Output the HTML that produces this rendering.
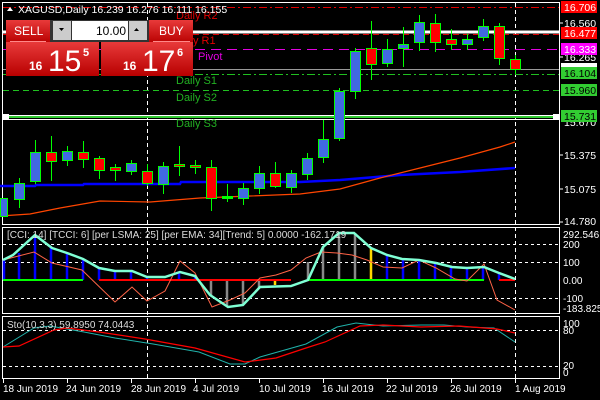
<!DOCTYPE html>
<html><head><meta charset="utf-8"><style>
body{margin:0;background:#000;width:600px;height:400px;overflow:hidden;font-family:"Liberation Sans",sans-serif}
svg{position:absolute;left:0;top:0}
text{font-family:"Liberation Sans",sans-serif}
</style></head><body>
<svg width="600" height="400" xmlns="http://www.w3.org/2000/svg" font-size="10">
<g stroke="#fff" fill="none" stroke-width="1">
<rect x="2.5" y="2.5" width="557" height="222"/>
<rect x="2.5" y="227.5" width="557" height="86"/>
<rect x="2.5" y="316.5" width="557" height="62"/>
</g>
<g stroke="#fff" stroke-dasharray="4,3">
<line x1="147.5" y1="3" x2="147.5" y2="378"/>
<line x1="515.5" y1="3" x2="515.5" y2="378"/>
</g>
<line x1="3" y1="7.5" x2="559" y2="7.5" stroke="#e00000" stroke-dasharray="8,3,2,3"/>
<line x1="3" y1="32" x2="559" y2="32" stroke="#fff" stroke-width="3"/>
<line x1="3" y1="34.5" x2="559" y2="34.5" stroke="#e00000" stroke-dasharray="6,4"/>
<line x1="3" y1="49.5" x2="559" y2="49.5" stroke="#e000e0" stroke-dasharray="10,6"/>
<line x1="3" y1="69.5" x2="559" y2="69.5" stroke="#999"/>
<line x1="3" y1="74.5" x2="559" y2="74.5" stroke="#20c020" stroke-dasharray="8,3,2,3"/>
<line x1="3" y1="90.5" x2="559" y2="90.5" stroke="#20c020" stroke-dasharray="6,4"/>
<line x1="3" y1="115.5" x2="559" y2="115.5" stroke="#fff"/>
<line x1="3" y1="117" x2="559" y2="117" stroke="#3c3" stroke-width="2"/>
<line x1="3" y1="119.5" x2="559" y2="119.5" stroke="#fff"/>
<rect x="2" y="114" width="7" height="6" fill="#fff"/>
<rect x="553" y="114" width="6" height="6" fill="#fff"/>
<text x="176" y="19" fill="#e00000" font-size="11">Daily R2</text>
<text x="193" y="44" fill="#e00000" font-size="11">y R1</text>
<text x="198" y="60" fill="#e000e0" font-size="11">Pivot</text>
<text x="176" y="84" fill="#22b022" font-size="11">Daily S1</text>
<text x="176" y="101" fill="#22b022" font-size="11">Daily S2</text>
<text x="176" y="127" fill="#22b022" font-size="11">Daily S3</text>
<polyline fill="none" stroke="#0000ff" stroke-width="2.5" points="0,186 35,186 36,185 83,185 84,184 180,184 181,182 300,182 340,180 400,175 460,172 515,168"/>
<polyline fill="none" stroke="#ff4500" stroke-width="1.2" points="0,216 30,214 60,208 100,201 150,202 200,198 250,196 300,194 340,189 380,178 420,168 460,158 500,147 515,142"/>
<g stroke="#00ff00" stroke-width="1">
<line x1="19.5" y1="178" x2="19.5" y2="208"/><line x1="35.5" y1="140" x2="35.5" y2="184"/><line x1="51.5" y1="136" x2="51.5" y2="181"/><line x1="67.5" y1="146" x2="67.5" y2="166"/><line x1="83.5" y1="141" x2="83.5" y2="168"/><line x1="99.5" y1="156" x2="99.5" y2="179"/><line x1="115.5" y1="164" x2="115.5" y2="181"/><line x1="131.5" y1="160" x2="131.5" y2="175"/><line x1="147.5" y1="164" x2="147.5" y2="186"/><line x1="163.5" y1="162" x2="163.5" y2="194"/><line x1="179.5" y1="146" x2="179.5" y2="176"/><line x1="195.5" y1="160" x2="195.5" y2="174"/><line x1="211.5" y1="160" x2="211.5" y2="211"/><line x1="227.5" y1="184" x2="227.5" y2="202"/><line x1="243.5" y1="183" x2="243.5" y2="205"/><line x1="259.5" y1="166" x2="259.5" y2="194"/><line x1="275.5" y1="162" x2="275.5" y2="188"/><line x1="291.5" y1="170" x2="291.5" y2="193"/><line x1="307.5" y1="153" x2="307.5" y2="180"/><line x1="323.5" y1="120" x2="323.5" y2="163"/><line x1="339.5" y1="88" x2="339.5" y2="141"/><line x1="355.5" y1="48" x2="355.5" y2="99"/><line x1="371.5" y1="21" x2="371.5" y2="80"/><line x1="387.5" y1="39" x2="387.5" y2="67"/><line x1="403.5" y1="27" x2="403.5" y2="67"/><line x1="419.5" y1="15" x2="419.5" y2="51"/><line x1="435.5" y1="14" x2="435.5" y2="52"/><line x1="451.5" y1="29" x2="451.5" y2="50"/><line x1="467.5" y1="34" x2="467.5" y2="50"/><line x1="483.5" y1="19" x2="483.5" y2="41"/><line x1="499.5" y1="23" x2="499.5" y2="65"/><line x1="515.5" y1="55" x2="515.5" y2="74"/>
</g>
<g stroke="#00ff00" stroke-width="1">
<rect x="0.5" y="198.5" width="7" height="18" fill="#4169e1"/>
<rect x="14.5" y="183.5" width="10" height="16" fill="#4169e1"/>
<rect x="30.5" y="152.5" width="10" height="29" fill="#4169e1"/>
<rect x="46.5" y="152.5" width="10" height="9" fill="#f00"/>
<rect x="62.5" y="151.5" width="10" height="9" fill="#4169e1"/>
<rect x="78.5" y="152.5" width="10" height="7" fill="#f00"/>
<rect x="94.5" y="158.5" width="10" height="12" fill="#f00"/>
<rect x="110.5" y="167.5" width="10" height="3" fill="#f00"/>
<rect x="126.5" y="163.5" width="10" height="8" fill="#4169e1"/>
<rect x="142.5" y="171.5" width="10" height="12" fill="#f00"/>
<rect x="158.5" y="166.5" width="10" height="18" fill="#4169e1"/>
<rect x="174.5" y="164.5" width="10" height="2" fill="#f00"/>
<rect x="190.5" y="165.5" width="10" height="2" fill="#f00"/>
<rect x="206.5" y="167.5" width="10" height="31" fill="#f00"/>
<rect x="222.5" y="196.5" width="10" height="2" fill="#00ff00"/>
<rect x="238.5" y="188.5" width="10" height="10" fill="#4169e1"/>
<rect x="254.5" y="173.5" width="10" height="15" fill="#4169e1"/>
<rect x="270.5" y="173.5" width="10" height="13" fill="#f00"/>
<rect x="286.5" y="173.5" width="10" height="14" fill="#4169e1"/>
<rect x="302.5" y="158.5" width="10" height="16" fill="#4169e1"/>
<rect x="318.5" y="139.5" width="10" height="18" fill="#4169e1"/>
<rect x="334.5" y="91.5" width="10" height="47" fill="#4169e1"/>
<rect x="350.5" y="51.5" width="10" height="40" fill="#4169e1"/>
<rect x="366.5" y="48.5" width="10" height="16" fill="#f00"/>
<rect x="382.5" y="49.5" width="10" height="14" fill="#4169e1"/>
<rect x="398.5" y="44.5" width="10" height="4" fill="#4169e1"/>
<rect x="414.5" y="22.5" width="10" height="20" fill="#4169e1"/>
<rect x="430.5" y="23.5" width="10" height="19" fill="#f00"/>
<rect x="446.5" y="39.5" width="10" height="5" fill="#f00"/>
<rect x="462.5" y="39.5" width="10" height="5" fill="#4169e1"/>
<rect x="478.5" y="26.5" width="10" height="11" fill="#4169e1"/>
<rect x="494.5" y="26.5" width="10" height="32" fill="#f00"/>
<rect x="510.5" y="59.5" width="10" height="10" fill="#f00"/>
</g>
<polygon points="7,11 10,7 13,11" fill="#fff"/>
<text x="18" y="13" fill="#fff" font-size="10.5">XAGUSD,Daily  16.239 16.276 16.111 16.155</text>
<g font-size="10.5">
<text x="564" y="27" fill="#fff">16.560</text>
<text x="564" y="61" fill="#fff">16.265</text>
<rect x="561" y="63" width="36" height="4" fill="#fff"/>
<text x="564" y="126" fill="#fff">15.670</text>
<text x="564" y="159" fill="#fff">15.375</text>
<text x="564" y="193" fill="#fff">15.075</text>
<text x="564" y="225" fill="#fff">14.780</text>
<rect x="561" y="1" width="36" height="12" fill="#f00"/><text x="564" y="11" fill="#fff">16.706</text>
<rect x="561" y="27" width="36" height="12" fill="#f00"/><text x="564" y="37" fill="#fff">16.477</text>
<rect x="561" y="43" width="36" height="12" fill="#f0f"/><text x="564" y="53" fill="#fff">16.333</text>
<rect x="561" y="67" width="36" height="12" fill="#32cd32"/><text x="564" y="77" fill="#000">16.104</text>
<rect x="561" y="84" width="36" height="12" fill="#32cd32"/><text x="564" y="94" fill="#000">15.960</text>
<rect x="561" y="110" width="36" height="12" fill="#32cd32"/><text x="564" y="120" fill="#000">15.731</text>
</g>
<g stroke="#fff"><line x1="559" y1="23" x2="563" y2="23"/><line x1="559" y1="57" x2="563" y2="57"/><line x1="559" y1="155" x2="563" y2="155"/><line x1="559" y1="189" x2="563" y2="189"/><line x1="559" y1="222" x2="563" y2="222"/></g>
<g stroke="#fff" stroke-dasharray="3,3"><line x1="3" y1="244.5" x2="559" y2="244.5"/><line x1="3" y1="262.5" x2="559" y2="262.5"/><line x1="3" y1="298.5" x2="559" y2="298.5"/><line x1="3" y1="330.5" x2="559" y2="330.5"/><line x1="3" y1="366.5" x2="559" y2="366.5"/></g>
<g stroke-width="2.5">
<line x1="4" y1="280" x2="4" y2="260" stroke="#00f"/><line x1="19" y1="280" x2="19" y2="253" stroke="#00f"/><line x1="35" y1="280" x2="35" y2="236" stroke="#00f"/><line x1="51" y1="280" x2="51" y2="248" stroke="#00f"/><line x1="67" y1="280" x2="67" y2="253" stroke="#00f"/><line x1="83" y1="280" x2="83" y2="259" stroke="#00f"/><line x1="99" y1="280" x2="99" y2="268" stroke="#00f"/><line x1="115" y1="280" x2="115" y2="271" stroke="#00f"/><line x1="131" y1="280" x2="131" y2="271" stroke="#00f"/><line x1="147" y1="280" x2="147" y2="277" stroke="#00f"/><line x1="179" y1="280" x2="179" y2="272" stroke="#00f"/><line x1="195" y1="280" x2="195" y2="276" stroke="#00f"/>
<line x1="211" y1="280" x2="211" y2="295" stroke="#888"/><line x1="227" y1="280" x2="227" y2="306" stroke="#888"/><line x1="243" y1="280" x2="243" y2="305" stroke="#888"/><line x1="259" y1="280" x2="259" y2="288" stroke="#888"/>
<line x1="275" y1="280" x2="275" y2="285" stroke="#ffd700"/>
<line x1="308" y1="280" x2="308" y2="262" stroke="#888"/><line x1="323" y1="280" x2="323" y2="247" stroke="#888"/><line x1="339" y1="280" x2="339" y2="233" stroke="#888"/><line x1="355" y1="280" x2="355" y2="233" stroke="#888"/>
<line x1="371" y1="280" x2="371" y2="248" stroke="#ffd700"/>
<line x1="387" y1="280" x2="387" y2="255" stroke="#00f"/><line x1="403" y1="280" x2="403" y2="259" stroke="#00f"/><line x1="419" y1="280" x2="419" y2="260" stroke="#00f"/><line x1="435" y1="280" x2="435" y2="263" stroke="#00f"/><line x1="451" y1="280" x2="451" y2="267" stroke="#00f"/><line x1="467" y1="280" x2="467" y2="268" stroke="#00f"/><line x1="483" y1="280" x2="483" y2="267" stroke="#00f"/><line x1="499" y1="280" x2="499" y2="273" stroke="#00f"/>
</g>
<g stroke-width="2"><line x1="3" y1="280" x2="83" y2="280" stroke="#0f0"/><line x1="308" y1="280" x2="484" y2="280" stroke="#0f0"/><line x1="99" y1="280" x2="291" y2="280" stroke="#f00"/><line x1="499" y1="280" x2="515" y2="280" stroke="#f00"/></g>
<polyline fill="none" stroke="#ff6347" stroke-width="1" points="3,260 34,252 52,263 82,270 115,302 132,287 147,301 165,291 180,261 195,273 212,307 230,300 245,293 260,278 276,275 291,270 306,258 321,252 337,253 352,255 367,260 383,267 402,268 419,260 436,268 455,279 467,281 484,264 497,300 515,310"/>
<polyline fill="none" stroke="#7fffd4" stroke-width="2.5" points="3,260 13,255 35,235 52,248 67,253 83,259 99,268 115,271 132,271 147,277 165,277 180,272 195,276 210,295 228,307 243,305 260,287 291,286 308,280 323,247 339,233 354,233 371,248 387,255 402,259 419,260 436,263 452,267 467,268 484,267 499,273 515,279"/>
<text x="7" y="238" fill="#ddd" font-size="10">[CCI: 14] [TCCI: 6] [per LSMA: 25] [per EMA: 34][Trend: 5]  0.0000 -162.1719</text>
<g fill="#fff" font-size="10"><text x="563" y="238">292.546</text><text x="563" y="248">200</text><text x="563" y="266">100</text><text x="563" y="284">0.00</text><text x="563" y="302">-100</text><text x="563" y="312">-183.825</text>
<text x="563" y="327">100</text><text x="563" y="334">80</text><text x="563" y="369">20</text><text x="563" y="376">0</text></g>
<polyline fill="none" stroke="#20b2aa" stroke-width="1" points="3,347 34,328 50,326 84,332 115,338 153,344 199,352 230,364 245,364 260,357 306,344 337,327 356,323 383,326 421,325 444,325 467,327 494,328 515,342"/>
<polyline fill="none" stroke="#f00" stroke-width="1.2" points="3,347 19,346 54,330 67,328 99,332 145,339 195,348 245,362 276,358 306,348 325,342 360,326 383,325 421,327 459,326 497,329 515,333"/>
<text x="7" y="328" fill="#ddd" font-size="10">Sto(10,3,3) 59.8950 74.0443</text>
<g fill="#fff" font-size="10"><text x="3" y="392">18 Jun 2019</text><text x="66" y="392">24 Jun 2019</text><text x="131" y="392">28 Jun 2019</text><text x="193" y="392">4 Jul 2019</text><text x="259" y="392">10 Jul 2019</text><text x="322" y="392">16 Jul 2019</text><text x="386" y="392">22 Jul 2019</text><text x="450" y="392">26 Jul 2019</text><text x="515" y="392">1 Aug 2019</text></g>
<g stroke="#fff"><line x1="3.5" y1="379" x2="3.5" y2="383"/><line x1="67.5" y1="379" x2="67.5" y2="383"/><line x1="131.5" y1="379" x2="131.5" y2="383"/><line x1="195.5" y1="379" x2="195.5" y2="383"/><line x1="259.5" y1="379" x2="259.5" y2="383"/><line x1="323.5" y1="379" x2="323.5" y2="383"/><line x1="387.5" y1="379" x2="387.5" y2="383"/><line x1="451.5" y1="379" x2="451.5" y2="383"/><line x1="515.5" y1="379" x2="515.5" y2="383"/></g>
<defs><linearGradient id="rg" x1="0" y1="0" x2="0" y2="1"><stop offset="0" stop-color="#e83a3a"/><stop offset="1" stop-color="#b80000"/></linearGradient></defs>
<rect x="6" y="20" width="44" height="23" fill="url(#rg)"/>
<rect x="149" y="20" width="44" height="23" fill="url(#rg)"/>
<rect x="6" y="42" width="93" height="34" fill="url(#rg)"/>
<rect x="101" y="42" width="92" height="34" fill="url(#rg)"/>
<line x1="10" y1="41.5" x2="46" y2="41.5" stroke="#f88"/>
<line x1="153" y1="41.5" x2="190" y2="41.5" stroke="#f88"/>
<rect x="50" y="20" width="99" height="22" fill="#333"/>
<rect x="53" y="21" width="18" height="19" fill="#ccc"/>
<rect x="72" y="21" width="56" height="19" fill="#fff"/>
<rect x="129" y="21" width="18" height="19" fill="#ccc"/>
<polygon points="59,28 64,28 61.5,31" fill="#000"/>
<polygon points="134,31 139,31 136.5,28" fill="#000"/>
<text x="126" y="35" fill="#000" font-size="12" text-anchor="end">10.00</text>
<text x="14" y="35" fill="#fff" font-size="12">SELL</text>
<text x="159" y="35" fill="#fff" font-size="12">BUY</text>
<text x="29" y="70" fill="#fff" font-size="12" font-weight="bold">16</text>
<text x="48" y="71" fill="#fff" font-size="30">15</text>
<text x="83" y="56" fill="#fff" font-size="11" font-weight="bold">5</text>
<text x="123" y="70" fill="#fff" font-size="12" font-weight="bold">16</text>
<text x="142" y="71" fill="#fff" font-size="30">17</text>
<text x="177" y="56" fill="#fff" font-size="11" font-weight="bold">6</text>
</svg>
</body></html>
